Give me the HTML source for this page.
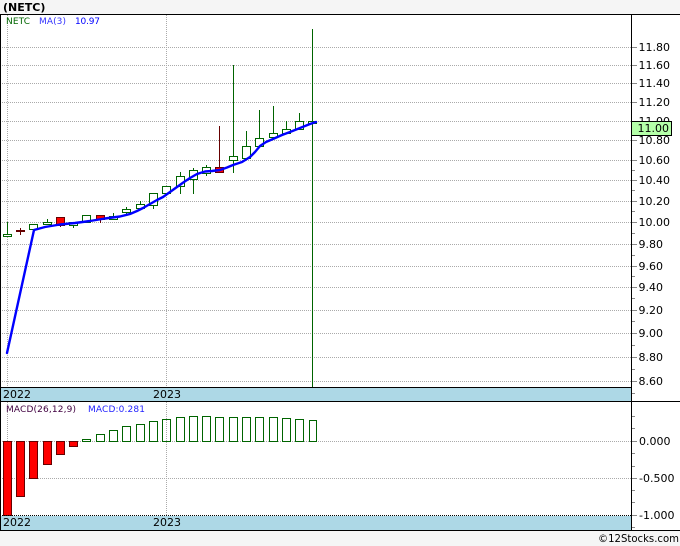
<!DOCTYPE html>
<html><head><meta charset="utf-8"><style>
html,body{margin:0;padding:0;background:#f5f5f5;width:680px;height:546px;overflow:hidden}
svg{display:block}
text{font-family:"DejaVu Sans",sans-serif;font-size:11px;fill:#000}
.g line{stroke:#aaa;stroke-width:1;stroke-dasharray:1 1}
.t line{stroke:#888;stroke-width:1}
.c rect,.m rect{fill:#fff;stroke:#006400;stroke-width:1}
.c line{stroke:#006400;stroke-width:1}
.c rect.r{fill:#f00;stroke:#600}
.c line.r{stroke:#600}
.m rect{fill:none}
.m rect.r{fill:#f00;stroke:#600}
</style></head><body>
<svg width="680" height="546" viewBox="0 0 680 546" xmlns="http://www.w3.org/2000/svg">
<rect x="0" y="0" width="680" height="546" fill="#f5f5f5"/>
<rect x="0" y="14" width="680" height="517" fill="#fff"/>
<text x="3" y="11" style="font-weight:bold">(NETC)</text>

<g class="g" shape-rendering="crispEdges">
<line x1="0" x2="632" y1="47.5" y2="47.5"/><line x1="0" x2="632" y1="65.5" y2="65.5"/><line x1="0" x2="632" y1="83.5" y2="83.5"/><line x1="0" x2="632" y1="102.5" y2="102.5"/><line x1="0" x2="632" y1="121.5" y2="121.5"/><line x1="0" x2="632" y1="140.5" y2="140.5"/><line x1="0" x2="632" y1="160.5" y2="160.5"/><line x1="0" x2="632" y1="180.5" y2="180.5"/><line x1="0" x2="632" y1="201.5" y2="201.5"/><line x1="0" x2="632" y1="222.5" y2="222.5"/><line x1="0" x2="632" y1="244.5" y2="244.5"/><line x1="0" x2="632" y1="266.5" y2="266.5"/><line x1="0" x2="632" y1="287.5" y2="287.5"/><line x1="0" x2="632" y1="310.5" y2="310.5"/><line x1="0" x2="632" y1="333.5" y2="333.5"/><line x1="0" x2="632" y1="357.5" y2="357.5"/><line x1="0" x2="632" y1="381.5" y2="381.5"/>
<line x1="7.5" x2="7.5" y1="15" y2="388"/><line x1="166.5" x2="166.5" y1="15" y2="388"/>
<line x1="0" x2="632" y1="441.5" y2="441.5"/><line x1="0" x2="632" y1="478.5" y2="478.5"/><line x1="0" x2="632" y1="515.5" y2="515.5"/>
<line x1="7.5" x2="7.5" y1="402" y2="516"/><line x1="166.5" x2="166.5" y1="402" y2="516"/>
</g>

<text x="6" y="24" textLength="24" style="font-size:9px;fill:#060">NETC</text>
<text x="39" y="24" textLength="27" style="font-size:9px;fill:#33f">MA(3)</text>
<text x="75" y="24" textLength="25" style="font-size:9px;fill:#00f">10.97</text>

<g class="c" shape-rendering="crispEdges">
<line x1="7.5" x2="7.5" y1="222" y2="234"/><rect x="3.5" y="234.5" width="8" height="2"/>
<line class="r" x1="20.5" x2="20.5" y1="228" y2="235"/><line class="r" x1="16" x2="25" y1="230.5" y2="230.5"/><line class="r" x1="16" x2="25" y1="231.5" y2="231.5"/>
<rect x="29.5" y="224.5" width="8" height="5"/>
<line x1="47.5" x2="47.5" y1="219" y2="222"/><rect x="43.5" y="222.5" width="8" height="2"/>
<line class="r" x1="60.5" x2="60.5" y1="225" y2="227"/><rect class="r" x="56.5" y="217.5" width="8" height="8"/>
<line x1="73.5" x2="73.5" y1="225" y2="228"/><rect x="69.5" y="222.5" width="8" height="3"/>
<rect x="82.5" y="215.5" width="8" height="7"/>
<line class="r" x1="100.5" x2="100.5" y1="219" y2="223"/><rect class="r" x="96.5" y="215.5" width="8" height="4"/>
<line x1="113.5" x2="113.5" y1="213" y2="220"/><rect x="109.5" y="216.5" width="8" height="3"/>
<line x1="126.5" x2="126.5" y1="207" y2="214"/><rect x="122.5" y="209.5" width="8" height="3"/>
<line x1="140.5" x2="140.5" y1="201" y2="209"/><rect x="136.5" y="204.5" width="8" height="4"/>
<line x1="153.5" x2="153.5" y1="205" y2="209"/><rect x="149.5" y="193.5" width="8" height="12"/>
<rect x="162.5" y="186.5" width="8" height="7"/>
<line x1="180.5" x2="180.5" y1="172" y2="194"/><rect x="176.5" y="176.5" width="8" height="10"/>
<line x1="193.5" x2="193.5" y1="168" y2="194"/><rect x="189.5" y="170.5" width="8" height="9"/>
<line x1="206.5" x2="206.5" y1="165" y2="176"/><rect x="202.5" y="167.5" width="8" height="6"/>
<line class="r" x1="219.5" x2="219.5" y1="126" y2="168"/><rect class="r" x="215.5" y="167.5" width="8" height="5"/>
<line x1="233.5" x2="233.5" y1="65" y2="173"/><rect x="229.5" y="156.5" width="8" height="4"/>
<line x1="246.5" x2="246.5" y1="131" y2="159"/><rect x="242.5" y="146.5" width="8" height="12"/>
<line x1="259.5" x2="259.5" y1="110" y2="138"/><rect x="255.5" y="138.5" width="8" height="8"/>
<line x1="273.5" x2="273.5" y1="106" y2="133"/><rect x="269.5" y="133.5" width="8" height="4"/>
<line x1="286.5" x2="286.5" y1="121" y2="129"/><rect x="282.5" y="129.5" width="8" height="4"/>
<line x1="299.5" x2="299.5" y1="113" y2="121"/><rect x="295.5" y="121.5" width="8" height="8"/>
<line x1="312.5" x2="312.5" y1="29" y2="387"/><rect x="308.5" y="121.5" width="8" height="2"/>
</g>

<polyline fill="none" stroke="#00f" stroke-width="2.4" stroke-linejoin="round" stroke-linecap="round" points="7,353 34,230 45,227 60,224.5 75,223 90,221 105,218.5 120,216.5 130,214 137,211 143,208 150,204 157,200 163,197 170,192 177,187 184,182 190,178 197,174 205,171.5 212,171 220,170 227,167.5 233,165 242,162 250,157 255,152 260,146 266,142 273,139 282,135 290,132 300,128 310,124 316,122"/>

<g class="m" shape-rendering="crispEdges">
<rect class="r" x="3.5" y="441.5" width="8" height="74"/><rect class="r" x="16.5" y="441.5" width="8" height="55"/><rect class="r" x="29.5" y="441.5" width="8" height="37"/><rect class="r" x="43.5" y="441.5" width="8" height="23"/><rect class="r" x="56.5" y="441.5" width="8" height="13"/><rect class="r" x="69.5" y="441.5" width="8" height="5"/>
<rect x="82.5" y="439.5" width="8" height="2"/><rect x="96.5" y="434.5" width="8" height="7"/><rect x="109.5" y="430.5" width="8" height="11"/><rect x="122.5" y="426.5" width="8" height="15"/><rect x="136.5" y="424.5" width="8" height="17"/><rect x="149.5" y="421.5" width="8" height="20"/><rect x="162.5" y="419.5" width="8" height="22"/><rect x="176.5" y="417.5" width="8" height="24"/><rect x="189.5" y="416.5" width="8" height="25"/><rect x="202.5" y="416.5" width="8" height="25"/><rect x="215.5" y="417.5" width="8" height="24"/><rect x="229.5" y="417.5" width="8" height="24"/><rect x="242.5" y="417.5" width="8" height="24"/><rect x="255.5" y="417.5" width="8" height="24"/><rect x="269.5" y="417.5" width="8" height="24"/><rect x="282.5" y="418.5" width="8" height="23"/><rect x="295.5" y="419.5" width="8" height="22"/><rect x="309.5" y="420.5" width="7" height="21"/>
</g>

<text x="6" y="412" textLength="70" style="font-size:9px;fill:#400040">MACD(26,12,9)</text>
<text x="88" y="412" textLength="57" style="font-size:9px;fill:#22f">MACD:0.281</text>

<rect x="0" y="388" width="631" height="13" fill="#add8e6"/>
<rect x="0" y="516" width="631" height="14" fill="#add8e6"/>
<g shape-rendering="crispEdges" fill="#000">
<rect x="0" y="14" width="680" height="1"/>
<rect x="0" y="387" width="632" height="1"/>
<rect x="0" y="401" width="680" height="1"/>
<rect x="0" y="530" width="680" height="1"/>
<rect x="0" y="14" width="1" height="517"/>
<rect x="631" y="14" width="1" height="517"/>
</g>
<line x1="0" x2="631" y1="515.5" y2="515.5" stroke="#000" stroke-dasharray="1 1" shape-rendering="crispEdges"/>
<text x="3" y="398">2022</text><text x="153" y="398">2023</text>
<text x="3" y="526">2022</text><text x="153" y="526">2023</text>

<g class="t" shape-rendering="crispEdges">
<line x1="632" x2="637" y1="47.5" y2="47.5"/><line x1="632" x2="637" y1="65.5" y2="65.5"/><line x1="632" x2="637" y1="83.5" y2="83.5"/><line x1="632" x2="637" y1="102.5" y2="102.5"/><line x1="632" x2="637" y1="140.5" y2="140.5"/><line x1="632" x2="637" y1="160.5" y2="160.5"/><line x1="632" x2="637" y1="180.5" y2="180.5"/><line x1="632" x2="637" y1="201.5" y2="201.5"/><line x1="632" x2="637" y1="222.5" y2="222.5"/><line x1="632" x2="637" y1="244.5" y2="244.5"/><line x1="632" x2="637" y1="266.5" y2="266.5"/><line x1="632" x2="637" y1="287.5" y2="287.5"/><line x1="632" x2="637" y1="310.5" y2="310.5"/><line x1="632" x2="637" y1="333.5" y2="333.5"/><line x1="632" x2="637" y1="357.5" y2="357.5"/><line x1="632" x2="637" y1="381.5" y2="381.5"/>
<line x1="632" x2="635" y1="170.5" y2="170.5"/><line x1="632" x2="635" y1="190.5" y2="190.5"/><line x1="632" x2="635" y1="211.5" y2="211.5"/><line x1="632" x2="635" y1="233.5" y2="233.5"/><line x1="632" x2="635" y1="255.5" y2="255.5"/><line x1="632" x2="635" y1="276.5" y2="276.5"/><line x1="632" x2="635" y1="298.5" y2="298.5"/><line x1="632" x2="635" y1="321.5" y2="321.5"/><line x1="632" x2="635" y1="345.5" y2="345.5"/><line x1="632" x2="635" y1="369.5" y2="369.5"/><line x1="632" x2="635" y1="393.5" y2="393.5"/>
<line x1="632" x2="635" y1="416.5" y2="416.5"/><line x1="632" x2="635" y1="428.5" y2="428.5"/><line x1="632" x2="637" y1="441.5" y2="441.5"/><line x1="632" x2="635" y1="453.5" y2="453.5"/><line x1="632" x2="635" y1="466.5" y2="466.5"/><line x1="632" x2="637" y1="478.5" y2="478.5"/><line x1="632" x2="635" y1="490.5" y2="490.5"/><line x1="632" x2="635" y1="502.5" y2="502.5"/><line x1="632" x2="637" y1="515.5" y2="515.5"/><line x1="632" x2="635" y1="527.5" y2="527.5"/>
</g>

<text x="638.5" y="51">11.80</text><text x="638.5" y="69">11.60</text><text x="638.5" y="87">11.40</text><text x="638.5" y="106">11.20</text><text x="638.5" y="125">11.00</text><text x="638.5" y="144">10.80</text><text x="638.5" y="164">10.60</text><text x="638.5" y="184">10.40</text><text x="638.5" y="205">10.20</text><text x="638.5" y="226">10.00</text><text x="638.5" y="248">9.80</text><text x="638.5" y="270">9.60</text><text x="638.5" y="291">9.40</text><text x="638.5" y="314">9.20</text><text x="638.5" y="337">9.00</text><text x="638.5" y="361">8.80</text><text x="638.5" y="385">8.60</text>

<rect x="631.5" y="121.5" width="40" height="14" fill="#b4ffa8" stroke="#000" shape-rendering="crispEdges"/>
<text x="637.5" y="132">11.00</text>

<text x="639" y="445">0.000</text><text x="639" y="482">-0.500</text><text x="639" y="519">-1.000</text>
<text x="598" y="542" textLength="81" lengthAdjust="spacingAndGlyphs">©12Stocks.com</text>
</svg>
</body></html>
